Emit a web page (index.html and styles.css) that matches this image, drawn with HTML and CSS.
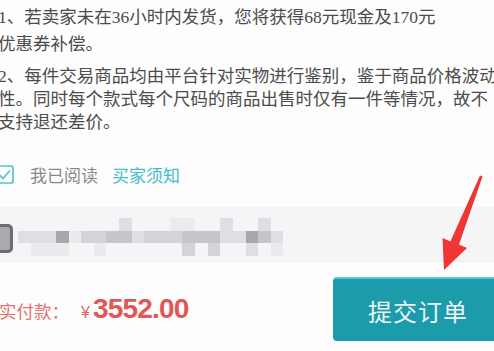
FILE: index.html
```html
<!DOCTYPE html>
<html lang="zh-CN">
<head>
  <meta charset="UTF-8">
  <meta name="viewport" content="width=device-width, initial-scale=1.0">
  <title>确认订单</title>
  <link rel="stylesheet" href="styles.css">
</head>
<body>

  <div class="notice">
    <p class="notice-p1">1、若卖家未在36小时内发货，您将获得68元现金及170元<br>优惠券补偿。</p>
    <p class="notice-p2">2、每件交易商品均由平台针对实物进行鉴别，鉴于商品价格波动<br>性。同时每个款式每个尺码的商品出售时仅有一件等情况，故不<br>支持退还差价。</p>
  </div>

  <div class="agree">
    <svg class="agree-box" width="19" height="19" viewBox="0 0 19 19">
      <rect x="1" y="1" width="17" height="17" rx="2" fill="none" stroke="#55c3cf" stroke-width="1.7"/>
      <polyline points="4,9.5 8,13.5 15,5.5" fill="none" stroke="#55c3cf" stroke-width="1.7"/>
    </svg>
    <span class="agree-text">我已阅读</span>
    <a class="agree-link">买家须知</a>
  </div>

  <!-- 打码区域 -->
  <div class="addr">
    <div class="addr-icon"></div>
    <div class="mosaic">
      <i></i><i></i><i></i><i></i><i></i><i></i><i></i><i></i><i class="c2"></i><i></i><i></i><i></i><i class="c1"></i><i class="c1"></i><i></i><i></i><i class="c2"></i><i></i><i></i><i class="c2"></i><i></i>
      <i class="c2"></i><i class="c2"></i><i class="c2"></i><i class="c5"></i><i class="c1"></i><i class="c3"></i><i class="c3"></i><i class="c4"></i><i class="c4"></i><i class="c2"></i><i class="c3"></i><i class="c3"></i><i class="c3"></i><i class="c4"></i><i class="c4"></i><i class="c4"></i><i class="c2"></i><i class="c2"></i><i class="c5"></i><i class="c4"></i><i class="c2"></i>
      <i></i><i class="c1"></i><i class="c1"></i><i class="c1"></i><i></i><i></i><i class="c1"></i><i></i><i></i><i></i><i></i><i></i><i></i><i class="c3"></i><i></i><i class="c3"></i><i></i><i></i><i class="c2"></i><i></i><i class="c1"></i>
    </div>
  </div>

  <div class="paybar">
    <div class="pay-total">
      <span class="pay-label">实付款：</span>
      <span class="pay-yen">¥</span>
      <span class="pay-num">3552.00</span>
    </div>
    <button class="submit-btn">提交订单</button>
  </div>

  <!-- 标注箭头 -->
  <svg class="mark-arrow" width="494" height="351" viewBox="0 0 494 351">
    <polygon points="480,175.5 482.5,176.5 459,244.6 467,248 444,270 442.5,238 450.4,241.4" fill="#ef3535"/>
  </svg>

</body>
</html>
```

FILE: styles.css
```css
body {
  margin: 0;
  width: 494px;
  height: 351px;
  overflow: hidden;
  position: relative;
  background-color: #fdfdfd;
  font-family: "Noto Sans CJK SC", sans-serif;
  white-space: nowrap;
}

.notice {
  padding-top: 4px;
  margin-left: -2px;
  font-family: "Liberation Serif", "Noto Sans CJK SC", serif;
  font-size: 17.5px;
  color: #4c4c4c;
}

.notice p {
  margin: 0;
}

.notice-p1 {
  line-height: 27px;
  margin-bottom: 7px !important;
}

.notice-p2 {
  line-height: 23px;
}

.agree {
  display: flex;
  align-items: center;
  height: 24px;
  margin-top: 28px;
  font-size: 17px;
}

.agree-box {
  margin-left: -5px;
  margin-right: 16px;
}

.agree-text {
  color: #888;
}

.agree-link {
  margin-left: 14px;
  color: #45bccb;
}

.addr {
  display: flex;
  align-items: flex-start;
  margin-top: 21px;
  height: 55px;
  padding-top: 11px;
  box-sizing: border-box;
  background-color: #f5f5f7;
  border-bottom: 1px solid #ededf0;
}

.addr-icon {
  width: 21px;
  height: 29px;
  margin-left: -8px;
  margin-top: 6px;
  border: 3px solid #6c6c72;
  border-radius: 5px;
  background-color: #a9a9af;
  box-sizing: border-box;
}

.mosaic {
  display: grid;
  grid-template-columns: repeat(21, 12.65px);
  grid-template-rows: repeat(3, 12.5px);
  margin-left: 5px;
}

.mosaic i { display: block; }
.mosaic .c1 { background-color: #ebebee; }
.mosaic .c2 { background-color: #dfdfe3; }
.mosaic .c3 { background-color: #d3d3d8; }
.mosaic .c4 { background-color: #c5c5cb; }
.mosaic .c5 { background-color: #a7a7ae; }

.paybar {
  display: flex;
  justify-content: space-between;
  align-items: flex-start;
  padding-top: 15px;
}

.pay-total {
  display: flex;
  align-items: baseline;
  margin-left: -1px;
  margin-top: 16px;
  color: #e4605e;
}

.pay-label {
  font-size: 17.5px;
  color: #e7716f;
}

.pay-yen {
  margin-left: 12px;
  font-family: "Liberation Sans", sans-serif;
  font-size: 16px;
}

.pay-num {
  margin-left: 3px;
  font-family: "Liberation Sans", sans-serif;
  font-weight: bold;
  font-size: 28px;
  letter-spacing: -0.8px;
  color: #e35656;
}

.submit-btn {
  width: 170px;
  height: 64px;
  margin-right: -9px;
  border: none;
  border-top: 2px solid #4ccfdc;
  border-radius: 4px;
  background-color: #1c9bab;
  color: #e9f7f9;
  font-family: "Noto Sans CJK SC", sans-serif;
  font-size: 24px;
  letter-spacing: 1px;
  padding: 0;
}

.mark-arrow {
  position: absolute;
  left: 0;
  top: 0;
}
```
